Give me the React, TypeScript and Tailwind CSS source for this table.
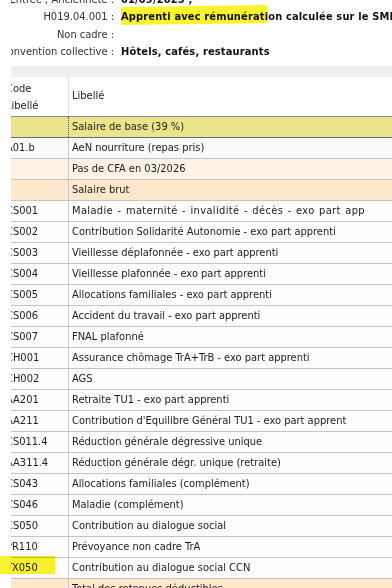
import React from "react";

const FONT = { fontFamily: '"DejaVu Sans Condensed", "DejaVu Sans", sans-serif' };

type Row = { code: string; label: string; kind?: "yellow" | "light" | "orange" | "plain" | "soft"; wide?: boolean };

const rows: Row[] = [
  { code: "", label: "Salaire de base (39 %)", kind: "yellow" },
  { code: "A01.b", label: "AeN nourriture (repas pris)", kind: "soft" },
  { code: "", label: "Pas de CFA en 03/2026", kind: "light" },
  { code: "", label: "Salaire brut", kind: "orange" },
  { code: "CS001", label: "Maladie - maternité - invalidité - décès - exo part app", wide: true },
  { code: "CS002", label: "Contribution Solidarité Autonomie - exo part apprenti" },
  { code: "CS003", label: "Vieillesse déplafonnée - exo part apprenti" },
  { code: "CS004", label: "Vieillesse plafonnée - exo part apprenti" },
  { code: "CS005", label: "Allocations familiales - exo part apprenti" },
  { code: "CS006", label: "Accident du travail - exo part apprenti" },
  { code: "CS007", label: "FNAL plafonné" },
  { code: "CH001", label: "Assurance chômage TrA+TrB - exo part apprenti" },
  { code: "CH002", label: "AGS" },
  { code: "AA201", label: "Retraite TU1 - exo part apprenti" },
  { code: "AA211", label: "Contribution d'Equilibre Général TU1 - exo part apprent" },
  { code: "CS011.4", label: "Réduction générale dégressive unique" },
  { code: "AA311.4", label: "Réduction générale dégr. unique (retraite)" },
  { code: "CS043", label: "Allocations familiales (complément)" },
  { code: "CS046", label: "Maladie (complément)" },
  { code: "CS050", label: "Contribution au dialogue social" },
  { code: "PR110", label: "Prévoyance non cadre TrA" },
  { code: "TX050", label: "Contribution au dialogue social CCN" },
  { code: "", label: "Total des retenues déductibles", kind: "orange" },
];

function rowBg(kind?: Row["kind"]) {
  switch (kind) {
    case "yellow":
      return "bg-[#ece48a]";
    case "light":
      return "bg-[#fdf3e5]";
    case "orange":
      return "bg-[#fde8cb]";
    case "soft":
      return "bg-[#fafafa]";
    default:
      return "bg-[#fdfdfd]";
  }
}

const infos: [string, string, boolean][] = [
  ["Entrée ; Ancienneté :", "01/09/2025 ;", false],
  ["H019.04.001 :", "Apprenti avec rémunération calculée sur le SMIC", true],
  ["Non cadre :", "", false],
  ["Convention collective :", "Hôtels, cafés, restaurants", false],
];

export default function App() {
  return (
    <div className="relative w-[392px] h-[588px] overflow-hidden bg-white text-[#1c1c1c]" style={FONT}>
      <div className="ml-[11px] w-[381px] h-[588px] overflow-hidden">
        {/* header info */}
        <div className="-mt-[9px] flex flex-col text-[11px]">
          {infos.map(([l, v, hl], i) => (
            <div key={i} className="flex h-[17.5px] items-center whitespace-nowrap">
              <div className="w-[103px] shrink-0 flex justify-end text-[#333]">
                <span className="shrink-0">{l}</span>
              </div>
              <div className="relative ml-[7px] font-bold text-[#111] tracking-[0.15px]">
                {hl ? (
                  <span className="absolute left-[0px] top-[-3px] h-[18px] w-[147px] bg-[#f8f32c] rounded-[2px] -rotate-[0.8deg]" />
                ) : null}
                <span className="relative">{v}</span>
              </div>
            </div>
          ))}
        </div>

        {/* gray band */}
        <div className="mt-[5px] h-[11px] bg-[#f0f0f0]" />

        {/* table */}
        <div className="text-[11px]">
          <div className="flex h-[40px] bg-white border-b border-[#7d8db0]">
            <div className="w-[58px] shrink-0 flex flex-col justify-center leading-[17px] text-[#222] border-r border-[#dde2ec] overflow-hidden">
              <span className="-ml-[5px]">Code</span>
              <span className="-ml-[5px]">Libellé</span>
            </div>
            <div className="flex-1 pl-[3px] flex items-center text-[#222]">Libellé</div>
          </div>
          {rows.map((r, i) => {
            const isYellow = r.kind === "yellow";
            return (
              <div
                key={i}
                className={`flex h-[21px] border-b ${isYellow ? "border-[#5d6e8f]" : "border-[#c4c4c4]"} ${rowBg(r.kind)}`}
              >
                <div
                  className={`w-[58px] shrink-0 flex items-center whitespace-nowrap overflow-hidden border-r ${
                    isYellow ? "border-dotted border-r-[#555]" : "border-[#c8c8c8]"
                  }`}
                >
                  <span className="-ml-[5px]">{r.code}</span>
                </div>
                <div
                  className={`flex-1 pl-[3px] flex items-center whitespace-nowrap overflow-hidden ${
                    r.wide ? "tracking-[0.35px] [word-spacing:1px]" : ""
                  }`}
                >
                  {r.label}
                </div>
              </div>
            );
          })}
        </div>
      </div>

      {/* highlighter mark bottom-left */}
      <div className="absolute left-0 top-[556px] h-[18px] w-[55px] bg-[#f8f32c] mix-blend-multiply" />
    </div>
  );
}
